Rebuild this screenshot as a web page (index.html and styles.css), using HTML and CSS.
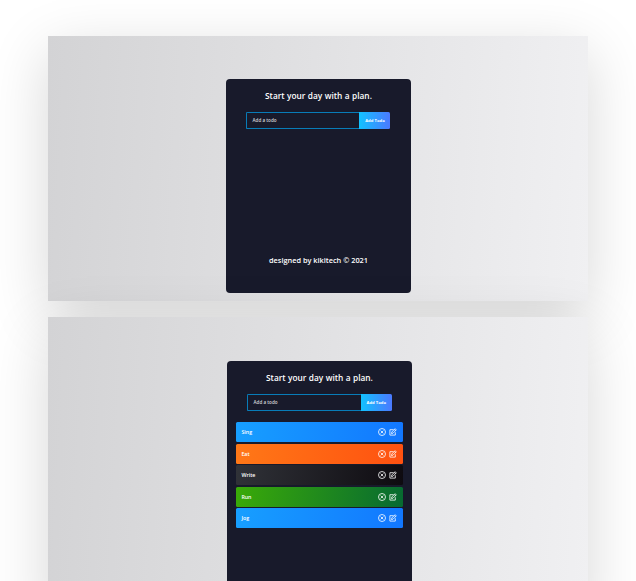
FILE: index.html
```
<!DOCTYPE html>
<html lang="en">
<head>
<meta charset="utf-8">
<title>Todo planner</title>
<link rel="stylesheet" href="styles.css">
</head>
<body>
<svg class="sprite" aria-hidden="true">
  <symbol id="close" viewBox="0 0 16 16"><circle cx="8" cy="8" r="7"/><path d="M5.2 5.2l5.6 5.6M10.8 5.2l-5.6 5.6"/></symbol>
  <symbol id="edit" viewBox="0 0 16 16"><path d="M9 3.4H1.8v10.8h10.8V8.5M5 11l.6-3L12.2 1.4l2.4 2.4L8 10.4zM10.5 3l2.5 2.5"/></symbol>
</svg>
<main class="showcase">
  <section class="screen">
    <div class="card">
      <h1 class="title">Start your day with a plan.</h1>
      <form class="form"><span class="field">Add a todo</span><button class="add" type="button">Add Todo</button></form>
      <footer class="credit">designed by kikitech © 2021</footer>
    </div>
  </section>
  <section class="screen filled">
    <div class="card">
      <h1 class="title">Start your day with a plan.</h1>
      <form class="form"><span class="field">Add a todo</span><button class="add" type="button">Add Todo</button></form>
      <ul class="list">
        <li class="todo blue"><span>Sing</span><span class="icons"><svg><use href="#close"/></svg><svg><use href="#edit"/></svg></span></li>
        <li class="todo orange"><span>Eat</span><span class="icons"><svg><use href="#close"/></svg><svg><use href="#edit"/></svg></span></li>
        <li class="todo black"><span>Write</span><span class="icons"><svg><use href="#close"/></svg><svg><use href="#edit"/></svg></span></li>
        <li class="todo green"><span>Run</span><span class="icons"><svg><use href="#close"/></svg><svg><use href="#edit"/></svg></span></li>
        <li class="todo blue"><span>Jog</span><span class="icons"><svg><use href="#close"/></svg><svg><use href="#edit"/></svg></span></li>
      </ul>
    </div>
  </section>
</main>
</body>
</html>
```
FILE: styles.css
```
* { box-sizing: border-box; }
body { margin: 0; background: #fff; font-family: "Trebuchet MS", "Open Sans", sans-serif; color: #fff; }
.sprite { display: none; }
.showcase { height: 581px; padding: 36px 48px 0; overflow: hidden; }
.screen {
  height: 265px;
  padding: 43.3px 0 0 178px;
  background: linear-gradient(93deg, #d3d3d5, #f0f0f2);
  box-shadow: 0 16px 56px rgba(0, 0, 0, .16);
}
.filled { height: 304px; margin-top: 16.4px; padding: 43.6px 0 0 178.7px; }
.card {
  display: flex;
  flex-direction: column;
  width: 185px;
  height: 213.7px;
  padding: 10px 9.3px 0;
  border-radius: 4px;
  background: #181a2b;
}
.filled .card { width: 185.6px; height: 230px; }
.title { margin: 0; font-size: 8.3px; line-height: 13px; font-weight: 600; word-spacing: .3px; text-align: center; white-space: nowrap; }
.form { display: flex; width: 144px; height: 17px; margin: 10px 0 0 11.2px; }
.field {
  flex: 1;
  padding-left: 5px;
  border: 1px solid #087cb8;
  border-right: 0;
  border-radius: 1.5px 0 0 1.5px;
  font-size: 4.6px;
  line-height: 15px;
  font-weight: 600;
  color: #d5d6da;
}
.add {
  width: 31px;
  padding: 0;
  border: 0;
  border-radius: 0 1.5px 1.5px 0;
  background: linear-gradient(90deg, #12c2ff, #4b79ff);
  font: 700 4.2px/17px "Trebuchet MS", "Open Sans", sans-serif;
  color: #fff;
}
.filled .form { width: 144.3px; margin-left: 11.5px; }
.credit { margin-top: 124.4px; font-size: 7.35px; line-height: 13px; font-weight: 600; text-align: center; white-space: nowrap; }
.list { display: grid; gap: 1.5px; margin: 11.4px 0 0; padding: 0; list-style: none; }
.todo {
  display: flex;
  align-items: center;
  justify-content: space-between;
  height: 20px;
  padding: 0 6.2px 0 5.4px;
  border-radius: 1.5px;
  font-size: 5.3px;
  font-weight: 600;
}
.icons { display: flex; gap: 2.4px; }
.icons svg { width: 8px; height: 8px; fill: none; stroke: #fff; stroke-width: 1.6; }
.blue { background: linear-gradient(98deg, #179fff, #1277ff); }
.orange { background: linear-gradient(98deg, #ff7817, #ff5110); }
.black { background: linear-gradient(98deg, #303238, #0e0b10); }
.green { background: linear-gradient(98deg, #3aaa08, #076a31); }
```
